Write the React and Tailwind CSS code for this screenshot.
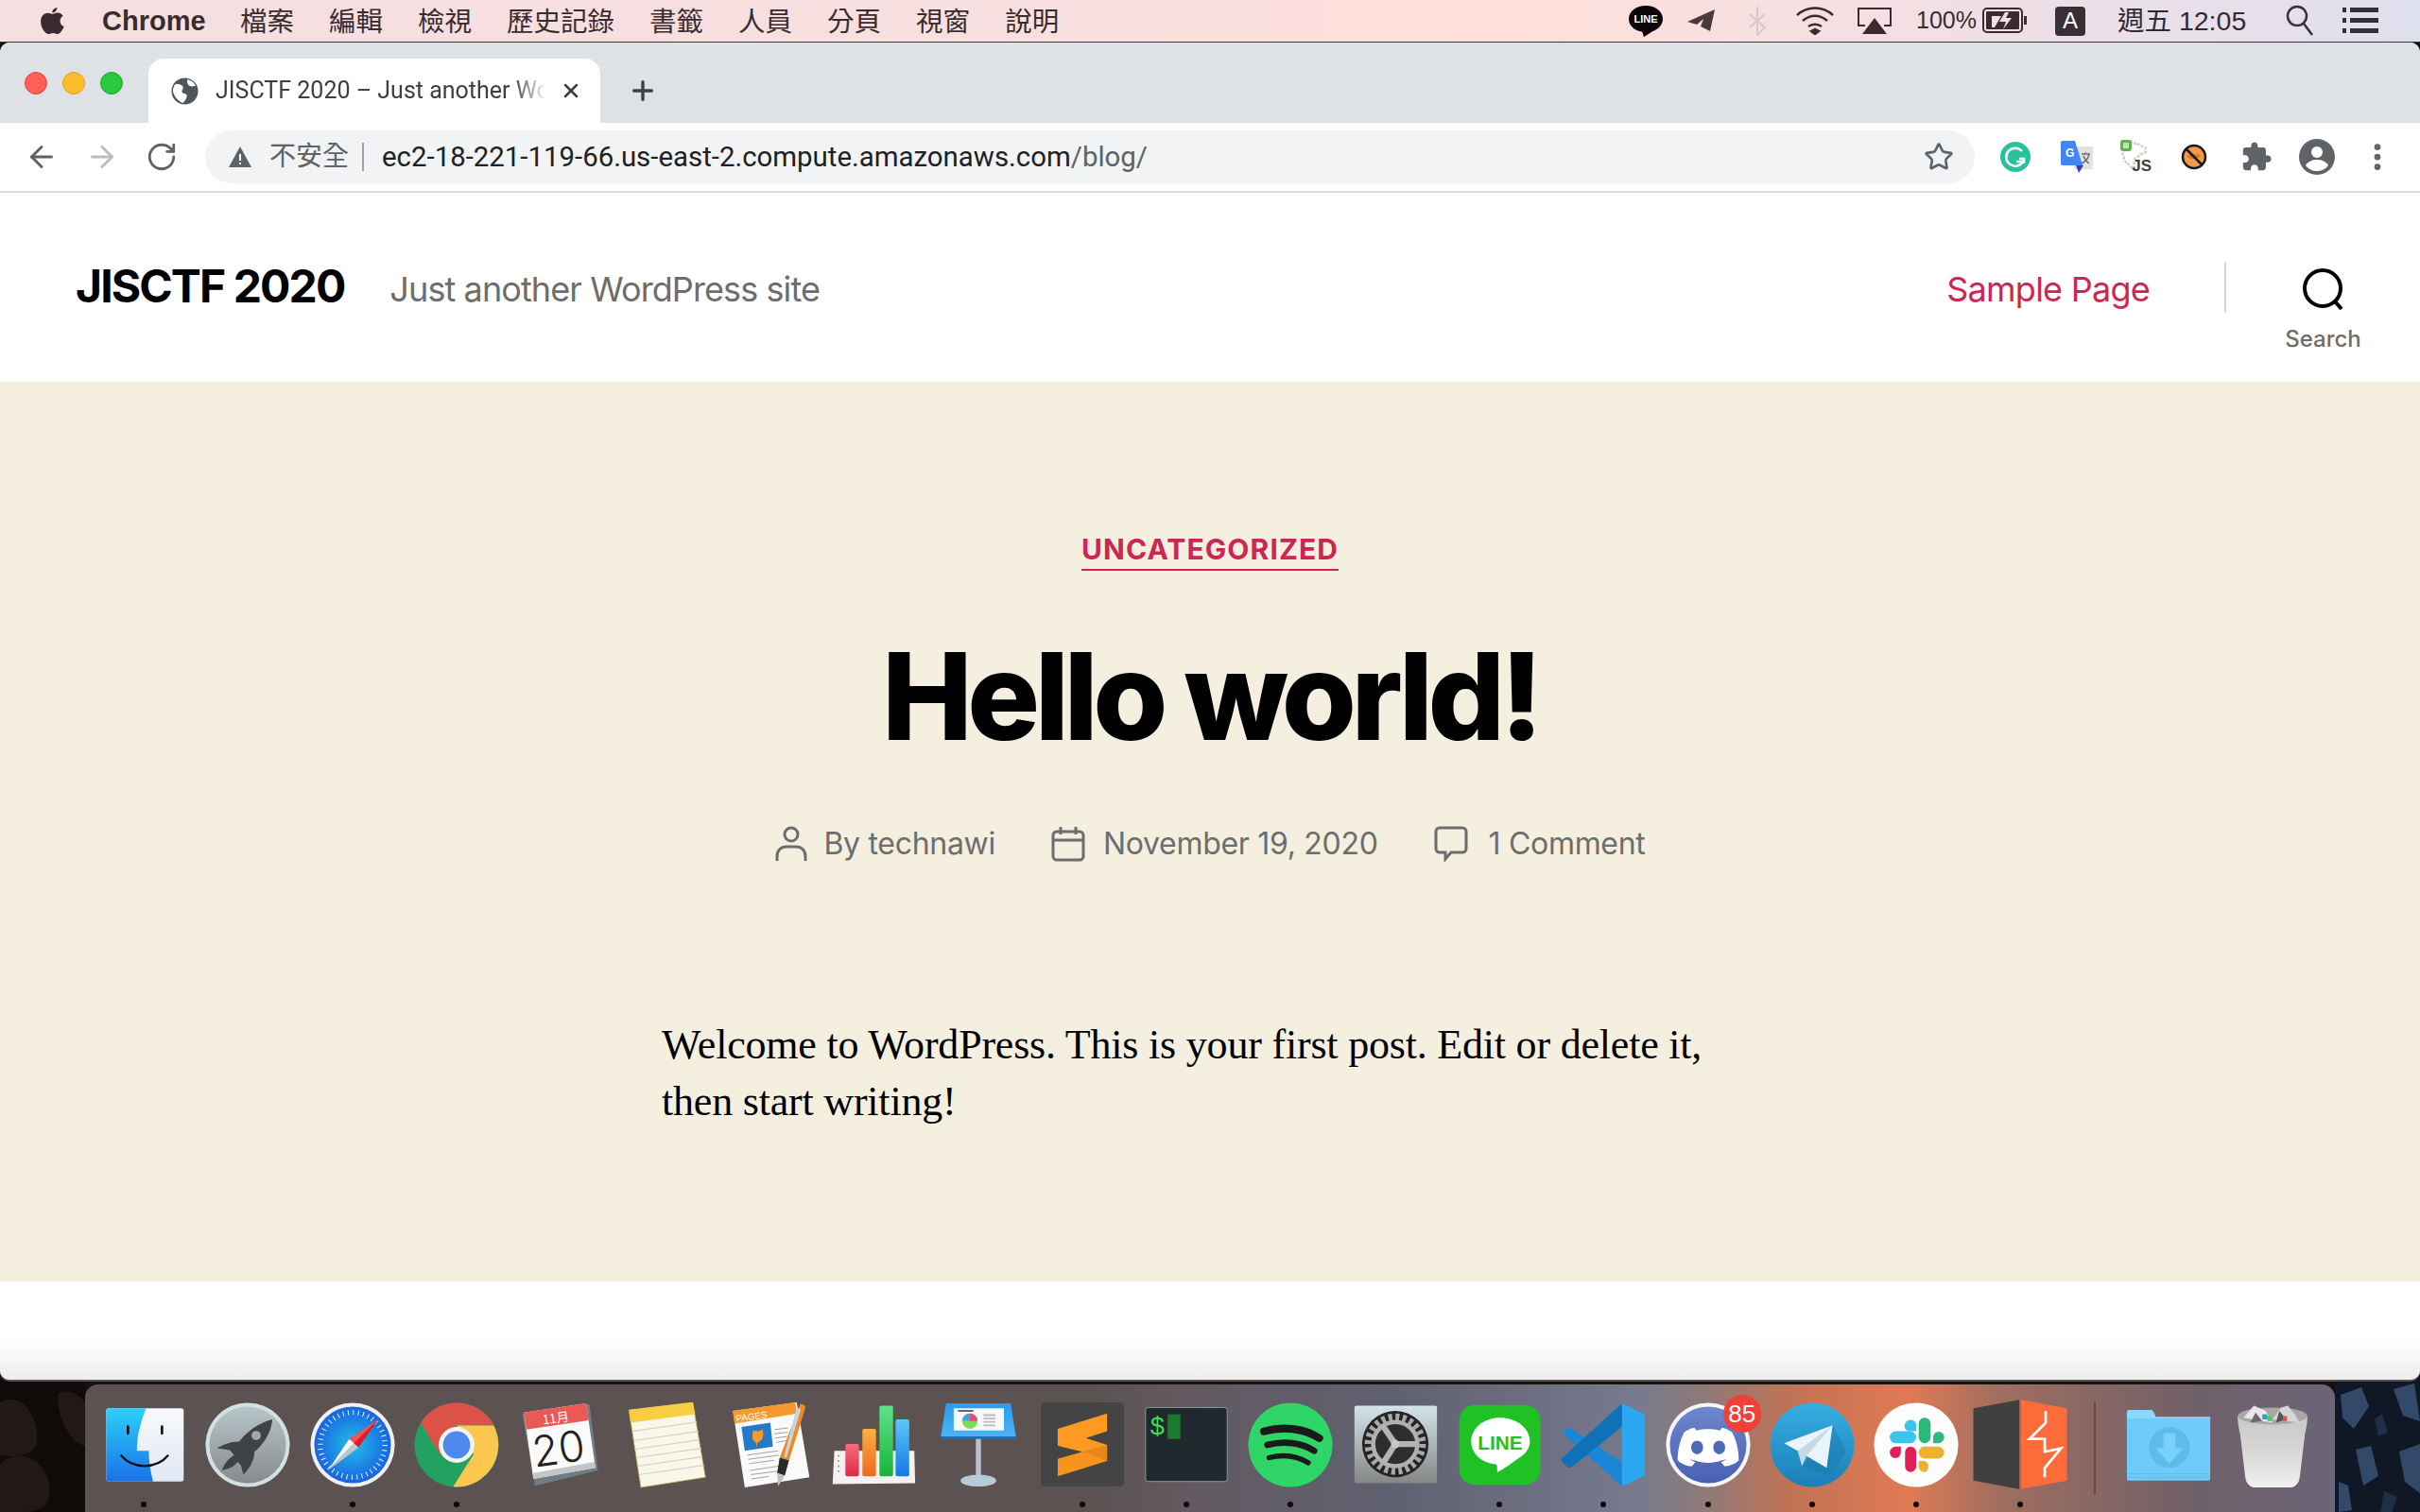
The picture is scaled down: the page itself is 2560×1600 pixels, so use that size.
import { ArrowLeft, ArrowRight, RotateCw, Star, Plus, X, EllipsisVertical } from 'lucide-react'

const MENUS = ['檔案', '編輯', '檢視', '歷史記錄', '書籤', '人員', '分頁', '視窗', '說明']

/* ── menu bar ── */
function MenuBar() {
  return (
    <div className="h-[44px] flex items-center justify-between bg-[linear-gradient(90deg,#f6dfe1_0%,#f8dfe0_40%,#ffe0da_62%,#f0dfe6_82%,#dfe0ee_100%)] border-b border-[#3b3338] box-content text-[#3a2c2e] font-['Liberation_Sans','Noto_Sans_CJK_TC',sans-serif] text-[28.5px]">
      <div className="flex items-center pl-[42px]">
        <svg viewBox="0 0 24 28" className="w-[26px] h-[32px] fill-[#3a2c2e]">
          <path d="M17 1c.2 2-1.700 5-4.700 5C12 3.700 14.300 1.300 17 1zM12.400 7.400c1 0 2.700-1.300 5-1.200 1 0 3.700.4 5.400 2.900-4.300 2.800-3.600 8.700.9 10.500-1 2.700-3.600 7.300-6.300 7.400-1.600 0-2.400-1-4.300-1s-2.800 1-4.300 1C5.200 26.900 1 20.400 1 14.700 1 9 4.600 6.300 7.900 6.300c1.900 0 3.400 1.100 4.500 1.100z" />
        </svg>
        <span className="ml-[40px] pt-[2px] font-bold text-[29px] w-[146px]">Chrome</span>
        <div className="flex gap-[37px] pt-[2px]">
          {MENUS.map((m) => <span key={m}>{m}</span>)}
        </div>
      </div>
      <div className="flex items-center pr-[44px]">
        <svg viewBox="0 0 36 33" className="w-[36px] h-[33px]">
          <path d="M18 0C8 0 0 6 0 14c0 7 6 12.500 14 13.600.8 1.400 1.200 3.400 2 5.400 3-1.800 6-4 9-5.800C31.500 25 36 20 36 14 36 6 28 0 18 0z" fill="#0c0508" />
          <text x="18" y="18" textAnchor="middle" fontSize="11" fontWeight="700" fill="#fff" fontFamily="Liberation Sans">LINE</text>
        </svg>
        <svg viewBox="0 0 30 24" className="ml-[26px] w-[30px] h-[24px] fill-[#4a3a3c]"><path d="M29 0 0 13l10 3 7-6-3 8 10 5z" /></svg>
        <svg viewBox="0 0 20 32" className="ml-[34px] w-[20px] h-[32px] fill-none stroke-[#d9c6c9] stroke-[2]"><path d="M10 1v30l8-8L2 9m0 14L18 9z" /></svg>
        <svg viewBox="0 0 42 30" className="ml-[30px] w-[42px] h-[30px] fill-none stroke-[#3a2c2e] stroke-[2.500]"><path d="M2 9c11-10 27-10 38 0M8 15c8-7 18-7 26 0" /><path d="M14 21c4-3 10-3 14 0" /><path d="M17 26l4-2 4 2-4 3z" fill="#3a2c2e" /></svg>
        <svg viewBox="0 0 38 30" className="ml-[23px] w-[38px] h-[30px]"><path d="M9 20H2V2h34v18h-7" fill="none" stroke="#3a2c2e" strokeWidth="2" /><path d="M19 12l13 17H6z" fill="#3a2c2e" /></svg>
        <span className="ml-[25px] text-[25px] w-[70px]">100%</span>
        <svg viewBox="0 0 48 28" className="w-[48px] h-[28px]">
          <rect x="1" y="1" width="41" height="25" rx="4" fill="none" stroke="#3a2c2e" strokeWidth="2" />
          <rect x="4" y="4" width="35" height="19" rx="1" fill="#3a2c2e" />
          <rect x="44" y="9" width="3" height="9" fill="#3a2c2e" />
          <path d="M10 9h10l-7 12h-3zM24 5 18 15h7l-3 8 9-12h-6l3-6z" fill="#f1dfe6" />
        </svg>
        <span className="ml-[29px] w-[32px] h-[31px] rounded-[4px] bg-[#3a2f35] text-white text-[24px] flex items-center justify-center">A</span>
        <span className="ml-[34px] w-[136px] whitespace-nowrap text-[#2f2b35]">週五 12:05</span>
        <svg viewBox="0 0 30 34" className="ml-[42px] w-[30px] h-[34px] fill-none stroke-[#3a3038] stroke-[2.500]"><circle cx="12" cy="12" r="10" /><path d="M19 20l9 12" /></svg>
        <svg viewBox="0 0 38 28" className="ml-[30px] w-[38px] h-[28px] fill-[#30303f]"><rect width="4" height="5" /><rect x="8" width="30" height="5" /><rect y="11" width="4" height="5" /><rect x="8" y="11" width="30" height="5" /><rect y="22" width="4" height="5" /><rect x="8" y="22" width="30" height="5" /></svg>
      </div>
    </div>
  )
}

/* ── tab strip ── */
function TabStrip() {
  return (
    <div className="h-[85px] bg-[#dee1e6] flex items-end rounded-t-[10px]">
      <div className="flex gap-[16px] h-[85px] items-center pl-[26px] w-[157px]">
        <span className="w-[24px] h-[24px] rounded-full bg-[#ff5f57] border border-[#e0443e] shrink-0" />
        <span className="w-[24px] h-[24px] rounded-full bg-[#febc2e] border border-[#dea123] shrink-0" />
        <span className="w-[24px] h-[24px] rounded-full bg-[#28c840] border border-[#1aab29] shrink-0" />
      </div>
      <div className="w-[478px] h-[68px] bg-white rounded-t-[16px] flex items-center pl-[24px]">
        <svg viewBox="0 0 30 30" className="w-[29px] h-[29px] shrink-0">
          <circle cx="15" cy="15" r="14.500" fill="#50555b" />
          <path d="M5 7c4 0 7 1 8 3s-2 4-1 6 4 1 5 3-1 6-4 9C8 26 3 21 2 15c0-3 1-6 3-8zM18 2c4 1 7 3 9 7-3 1-5 1-7 0s-3-4-2-7z" fill="#fff" />
        </svg>
        <span className="ml-[18px] w-[350px] overflow-hidden whitespace-nowrap text-[25px] text-[#3c4043] font-['Roboto',sans-serif] [mask-image:linear-gradient(90deg,#000_90%,transparent)]">JISCTF 2020 – Just another WordPress site</span>
        <X className="ml-[14px] w-[24px] h-[24px] text-[#3c4043]" strokeWidth={2.5} />
      </div>
      <div className="h-[68px] flex items-center pl-[29px]">
        <Plus className="w-[32px] h-[32px] text-[#3c4043]" strokeWidth={2.5} />
      </div>
    </div>
  )
}

/* ── toolbar ── */
function Toolbar() {
  return (
    <div className="h-[74px] bg-white border-b-2 border-[#dadce0] flex items-center">
      <ArrowLeft className="ml-[26px] w-[36px] h-[36px] text-[#5f6368]" strokeWidth={2} />
      <ArrowRight className="ml-[28px] w-[36px] h-[36px] text-[#b9bcc0]" strokeWidth={2} />
      <RotateCw className="ml-[28px] w-[34px] h-[34px] text-[#5f6368]" strokeWidth={2} />
      <div className="ml-[29px] w-[1872px] h-[56px] rounded-full bg-[#f1f3f4] flex items-center pl-[24px] font-['Roboto','Noto_Sans_CJK_TC',sans-serif]">
        <svg viewBox="0 0 26 24" className="w-[26px] h-[24px]"><path d="M13 1 25 23H1z" fill="#5f6368" /><rect x="12" y="9" width="2" height="7" fill="#fff" /><rect x="12" y="18" width="2" height="2" fill="#fff" /></svg>
        <span className="ml-[18px] text-[28px] text-[#5f6368]">不安全</span>
        <span className="ml-[14px] w-[2px] h-[30px] bg-[#9aa0a6]" />
        <span className="ml-[19px] text-[29.400px] text-[#202124] whitespace-nowrap">ec2-18-221-119-66.us-east-2.compute.amazonaws.com<span className="text-[#5f6368]">/blog/</span></span>
        <Star className="ml-auto mr-[22px] w-[32px] h-[32px] text-[#5f6368]" strokeWidth={2} />
      </div>
      <svg viewBox="0 0 32 32" className="ml-[27px] w-[32px] h-[32px]">
        <circle cx="16" cy="16" r="16" fill="#27c29c" />
        <path d="M23 10a9.500 9.500 0 1 0 1 11h-7" fill="none" stroke="#fff" strokeWidth="2.500" />
        <path d="M20 18h5v5" fill="none" stroke="#fff" strokeWidth="2.500" />
      </svg>
      <svg viewBox="0 0 34 34" className="ml-[32px] w-[34px] h-[34px]">
        <rect x="14" y="6" width="20" height="24" rx="1" fill="#e2e2e2" />
        <path d="M2 0h13l8 26H2a2 2 0 0 1-2-2V2a2 2 0 0 1 2-2z" fill="#4285f4" />
        <path d="M16 26h8l-5 8z" fill="#3a3fb0" />
        <text x="5" y="17" fontSize="12" fontWeight="700" fill="#fff" fontFamily="Liberation Sans">G</text>
        <path d="M22 14h9M26 12v2M30 14c-1 5-4 8-8 10M24 16c1 3 3 6 6 8" fill="none" stroke="#6a7076" strokeWidth="1.400" />
      </svg>
      <svg viewBox="0 0 34 36" className="ml-[29px] w-[34px] h-[36px]">
        <path d="M10 3c3-2 6 0 6 2 3-1 6 0 7 2 3 0 5 3 4 5-1 3-4 3-6 3-1 3-5 3-6 6 0 3-1 6 0 9-3 0-7-3-7-6-3 0-5-3-4-6-2-2-2-5 0-7" fill="none" stroke="#cfcfcf" strokeWidth="2.500" strokeDasharray="3 1.500" />
        <rect x="0" y="0" width="12" height="12" rx="3" fill="#62b34e" />
        <rect x="3" y="3" width="6" height="6" rx="1" fill="#bfe5b0" />
        <text x="33" y="33" textAnchor="end" fontSize="17" fontWeight="700" fill="#3c4043" fontFamily="Liberation Sans">JS</text>
      </svg>
      <svg viewBox="0 0 28 30" className="ml-[30px] w-[28px] h-[30px]">
        <circle cx="14" cy="15" r="12" fill="#f2994a" stroke="#1a1a1a" strokeWidth="2.500" />
        <path d="M7 14c4-2 10-2 14-1-1 4-9 5-13 3z" fill="#d77a1e" />
        <path d="M5 6l18 18" stroke="#1a1a1a" strokeWidth="2.500" />
      </svg>
      <svg viewBox="0 0 24 24" className="ml-[35px] w-[34px] h-[34px] fill-[#5f6368]">
        <path d="M20.500 11H19V7c0-1.100-.9-2-2-2h-4V3.500C13 2.120 11.880 1 10.500 1S8 2.120 8 3.500V5H4c-1.100 0-1.990.9-1.990 2v3.800H3.500c1.490 0 2.700 1.210 2.700 2.700s-1.210 2.700-2.700 2.700H2V20c0 1.100.9 2 2 2h3.800v-1.500c0-1.490 1.210-2.700 2.700-2.700 1.490 0 2.700 1.210 2.700 2.700V22H17c1.100 0 2-.9 2-2v-4h1.500c1.380 0 2.500-1.120 2.500-2.500S21.880 11 20.500 11z" />
      </svg>
      <svg viewBox="0 0 38 38" className="ml-[28px] w-[38px] h-[38px]">
        <circle cx="19" cy="19" r="19" fill="#5f6368" />
        <circle cx="19" cy="14" r="6" fill="#fff" />
        <path d="M7 28c3-5 8-6 12-6s9 1 12 6c-3 4-7 6-12 6S10 32 7 28z" fill="#fff" />
      </svg>
      <EllipsisVertical className="ml-[27px] w-[36px] h-[36px] text-[#5f6368]" strokeWidth={2.5} />
    </div>
  )
}

/* ── wordpress page ── */
function PageHeader() {
  return (
    <header className="h-[200px] bg-white flex items-center font-['Inter',sans-serif] pl-[80px]">
      <span className="text-[48px] font-bold tracking-[-1.900px] text-black pb-[2px]">JISCTF 2020</span>
      <span className="ml-[48px] text-[36px] text-[#6d6d6d] tracking-[-0.900px] pt-[4px]">Just another WordPress site</span>
      <span className="ml-auto text-[36px] text-[#cd2653] tracking-[-0.750px] pt-[3px]">Sample Page</span>
      <span className="ml-[79px] w-[2px] h-[54px] bg-[#dcd7ca]" />
      <div className="w-[205px] flex flex-col items-center pt-[52px]">
        <svg viewBox="0 0 46 46" className="w-[46px] h-[46px] fill-none stroke-black stroke-[4]">
          <circle cx="22" cy="21" r="19" />
          <path d="M35 35l7 8" />
        </svg>
        <span className="mt-[11px] text-[24px] font-medium text-[#6d6d6d]">Search</span>
      </div>
    </header>
  )
}

function Post() {
  return (
    <main className="h-[952px] bg-[#f5efe0] font-['Inter',sans-serif] flex flex-col items-center">
      <span className="mt-[159px] text-[30px] font-bold tracking-[1.100px] text-[#cd2653] border-b-2 border-[#cd2653] leading-[36px] pb-[3px]">UNCATEGORIZED</span>
      <h1 className="mt-[58px] text-[128px] font-[800] leading-[150px] tracking-[-5.500px] text-black">Hello world!</h1>
      <div className="mt-[61px] flex items-center text-[32px] text-[#6d6d6d] leading-[40px] tracking-[-0.300px]">
        <svg viewBox="0 0 36 38" className="w-[36px] h-[38px] fill-none stroke-[#6d6d6d] stroke-[3]">
          <circle cx="18" cy="9" r="7" />
          <path d="M3 37v-5c0-6 4-10 10-10h10c6 0 10 4 10 10v5" />
        </svg>
        <span className="ml-[16px]">By technawi</span>
        <svg viewBox="0 0 36 38" className="ml-[59px] w-[36px] h-[38px] fill-none stroke-[#6d6d6d] stroke-[3]">
          <rect x="2" y="6" width="32" height="30" rx="4" />
          <path d="M2 15h32M10 1v8M26 1v8" />
        </svg>
        <span className="ml-[19px]">November 19, 2020</span>
        <svg viewBox="0 0 36 38" className="ml-[59px] w-[36px] h-[38px] fill-none stroke-[#6d6d6d] stroke-[3]"><path d="M6 2h24a4 4 0 0 1 4 4v18a4 4 0 0 1-4 4H18l-6 7v-7H6a4 4 0 0 1-4-4V6a4 4 0 0 1 4-4z" /></svg>
        <span className="ml-[22px]">1 Comment</span>
      </div>
      <p className="mt-[163px] w-[1160px] text-[44px] leading-[60px] text-black font-['Liberation_Serif',serif] tracking-[-0.200px]">
        Welcome to WordPress. This is your first post. Edit or delete it,<br />then start writing!
      </p>
    </main>
  )
}

function Defs() {
  return (
    <defs>
      <linearGradient id="finderL" x1="0" y1="0" x2="0" y2="1"><stop offset="0" stopColor="#2bd0fb" /><stop offset="1" stopColor="#1a72e6" /></linearGradient>
      <linearGradient id="finderR" x1="0" y1="0" x2="0" y2="1"><stop offset="0" stopColor="#f8f9fb" /><stop offset="1" stopColor="#dfe9f5" /></linearGradient>
      <linearGradient id="rocketG" x1="0" y1="0" x2="0" y2="1"><stop offset="0" stopColor="#b6c5c9" /><stop offset="1" stopColor="#888b8c" /></linearGradient>
      <radialGradient id="safariG"><stop offset="0" stopColor="#1fc0e8" /><stop offset="1" stopColor="#1a63e0" /></radialGradient>
      <linearGradient id="redB" x1="0" y1="0" x2="0" y2="1"><stop offset="0" stopColor="#f76b7c" /><stop offset="1" stopColor="#df2a44" /></linearGradient>
      <linearGradient id="orB" x1="0" y1="0" x2="0" y2="1"><stop offset="0" stopColor="#fbb040" /><stop offset="1" stopColor="#ee6a1f" /></linearGradient>
      <linearGradient id="grB" x1="0" y1="0" x2="0" y2="1"><stop offset="0" stopColor="#5fe28a" /><stop offset="1" stopColor="#17b33c" /></linearGradient>
      <linearGradient id="blB" x1="0" y1="0" x2="0" y2="1"><stop offset="0" stopColor="#5cc8fb" /><stop offset="1" stopColor="#1478e8" /></linearGradient>
      <linearGradient id="kn" x1="0" y1="0" x2="0" y2="1"><stop offset="0" stopColor="#2a9bef" /><stop offset="1" stopColor="#4cb3f5" /></linearGradient>
      <linearGradient id="prefsG" x1="0" y1="0" x2="0" y2="1"><stop offset="0" stopColor="#d3e4ea" /><stop offset="1" stopColor="#868686" /></linearGradient>
      <linearGradient id="tgG" x1="0" y1="0" x2="0" y2="1"><stop offset="0" stopColor="#37aee2" /><stop offset="1" stopColor="#1a7fb8" /></linearGradient>
      <linearGradient id="dcG" x1="0" y1="0" x2="0" y2="1"><stop offset="0" stopColor="#6f86cf" /><stop offset="1" stopColor="#4760b0" /></linearGradient>
      <linearGradient id="trG" x1="0" y1="0" x2="0" y2="1"><stop offset="0" stopColor="#c9c9c9" /><stop offset="0.500" stopColor="#d8d6d6" /><stop offset="1" stopColor="#f1f1f1" /></linearGradient>
    </defs>
  )
}

/* ── dock icons, all on a 100x100 box ── */
const ICONS = {
  finder: (
    <>
      <rect x="6" y="7" width="91" height="86" rx="3" fill="url(#finderR)" />
      <path d="M9 7h44c-6 14-11 32-11 50h14c0 12 2 24 5 36H9a3 3 0 0 1-3-3V10a3 3 0 0 1 3-3z" fill="url(#finderL)" />
      <path d="M23 62c14 17 42 17 56 0" fill="none" stroke="#111" strokeWidth="2.500" />
      <rect x="30" y="27" width="3" height="11" rx="1.500" fill="#111" /><rect x="70" y="27" width="3" height="11" rx="1.500" fill="#111" />
    </>
  ),
  rocket: (
    <>
      <circle cx="50" cy="50" r="49.500" fill="#d3e0e2" />
      <circle cx="50" cy="50" r="45" fill="url(#rocketG)" />
      <path d="M79 20C62 24 48 36 40 46c-10 0-20 4-26 8l15 2 5 6c-6 4-12 10-14 18 8-2 14-4 18-10l4 4 3 11c7-7 13-17 13-27 12-10 20-24 21-38z" fill="#3f4246" />
      <circle cx="60" cy="39" r="5.500" fill="#a3a8aa" />
    </>
  ),
  safari: (
    <>
      <circle cx="50" cy="50" r="49.500" fill="#eef2f5" />
      <circle cx="50" cy="50" r="45" fill="url(#safariG)" />
      <circle cx="50" cy="50" r="38" fill="none" stroke="#d5ebfb" strokeWidth="6" strokeDasharray="1.200 4.770" />
      <path d="M81 19 46 43l5.500 5z" fill="#f2534f" />
      <path d="M81 19 51.500 48l5.500 5z" fill="#d91f26" />
      <path d="M21 80 46 43l5.500 5z" fill="#f4f5f6" />
      <path d="M21 80 51.500 48l5.500 5z" fill="#c2c6ca" />
    </>
  ),
  chrome: (
    <>
      <circle cx="50" cy="50" r="49.500" fill="#23a160" />
      <path d="M50 27h43.500A49.500 49.500 0 0 1 46 99.300L70 61z" fill="#fdc74f" />
      <path d="M8 24A49.500 49.500 0 0 1 94 27H50L30 61z" fill="#dc5148" />
      <circle cx="50" cy="50" r="21" fill="#f2f4f6" />
      <circle cx="50" cy="50" r="16" fill="#5089ee" />
    </>
  ),
  calendar: (
    <>
      <path d="M5 14 84 2l10 78-74 18z" fill="#6f7e86" />
      <path d="M7 12 80 1l11 76-73 13z" fill="#fafafa" />
      <path d="M18 83 90 70l1 7-73 13z" fill="#c6c6c6" />
      <path d="M7 12 80 1l3 20L10 32z" fill="#e95a57" />
      <text x="45" y="24" textAnchor="middle" fontSize="15" fill="#fff" fontFamily="Noto Sans CJK TC" transform="rotate(-8 45 24)">11月</text>
      <text x="50" y="72" textAnchor="middle" fontSize="50" fontWeight="300" fill="#222" fontFamily="Inter" transform="rotate(-8 50 72)">20</text>
    </>
  ),
  notes: (
    <>
      <path d="M7 9 82 0l15 88-76 12z" fill="#f9f6ea" stroke="#c9a84a" strokeWidth="0.800" />
      <path d="M7 9 82 0l3 14L9 24z" fill="#f7cd42" />
      <path d="M11 34l76-11M13 45l76-11M14 55l76-11M16 65l76-11M17 75l76-11M19 85l76-11" stroke="#d3d0c4" strokeWidth="1.200" />
    </>
  ),
  pages: (
    <>
      <path d="M7 10 82 0l15 88-76 12z" fill="#fafafa" />
      <path d="M7 10 80 0l3 13L9 25z" fill="#f59a2f" />
      <text x="11" y="23" fontSize="11" fill="#fff" fontFamily="Liberation Sans" transform="rotate(-8 11 23)">PAGES</text>
      <path d="M17 29 51 24l3 28-33 5z" fill="#2579c9" />
      <path d="M31 33l6 1 5-2c2 8-1 14-6 15l-1 6-1-6c-5-2-5-8-3-14z" fill="#f59a2f" />
      <path d="M56 32l16-2M56 37l16-2M57 42l14-2M58 47l12-2M24 62l36-5M25 67l36-5M26 72l30-4M27 80l40-6M28 85l38-5M29 90l20-3" stroke="#9a9a9a" strokeWidth="1" />
      <path d="M86 2c4 0 7 2 6 5L73 68l-11-3z" fill="#f08a1c" />
      <path d="M82 6l5 2-17 57-3-1z" fill="#c3d6e6" />
      <path d="M62 65l11 3-5 18-9-3z" fill="#2a2a2a" />
      <path d="M59 83l9 3-8 13z" fill="#b9c4cc" />
    </>
  ),
  numbers: (
    <>
      <path d="M4 57h94l1 38-97 1z" fill="#f2f2f2" />
      <rect x="17" y="49" width="16" height="38" rx="2" fill="url(#redB)" />
      <rect x="37" y="31" width="16" height="56" rx="2" fill="url(#orB)" />
      <rect x="57" y="4" width="16" height="83" rx="2" fill="url(#grB)" />
      <rect x="76" y="20" width="16" height="67" rx="2" fill="url(#blB)" />
      <path d="M9 62v2M9 68v2M9 74v2M9 80v2" stroke="#999" strokeWidth="2" />
    </>
  ),
  keynote: (
    <>
      <path d="M12 1h76l6 39H6z" fill="url(#kn)" />
      <rect x="6" y="40" width="88" height="3" fill="#1a6fb8" />
      <rect x="21" y="7" width="59" height="26" fill="#f6f8fb" />
      <rect x="26" y="9" width="18" height="2" fill="#555" />
      <circle cx="40" cy="22" r="9" fill="#7ed957" />
      <path d="M40 22v-9a9 9 0 0 1 9 9z" fill="#f0477f" />
      <path d="M40 22l-9-1a9 9 0 0 1 9-8z" fill="#3ba5e8" />
      <path d="M56 15h14M56 19h14M56 23h14M56 27h14" stroke="#bbb" strokeWidth="2" />
      <rect x="47" y="43" width="6" height="46" fill="#b6c4d0" />
      <ellipse cx="50" cy="92" rx="21" ry="7" fill="#b8cad8" />
    </>
  ),
  sublime: (
    <>
      <rect x="1" y="0" width="98" height="99" rx="5" fill="#444444" />
      <path d="M21 31 79 13v21l-25 8 25 8v19L21 51z" fill="#ff9a20" />
      <path d="M21 66l29-8 29 11-58 18z" fill="#f7941e" />
      <path d="M50 58 21 51v15z" fill="#444444" />
      <path d="M50 58 79 50v19z" fill="#e8871a" />
    </>
  ),
  terminal: (
    <>
      <rect x="2" y="6" width="96" height="87" rx="3" fill="#20292e" stroke="#9aa3a7" strokeWidth="1" />
      <text x="7" y="38" fontSize="30" fill="#3ddc58" fontFamily="Liberation Mono">$</text>
      <rect x="28" y="14" width="15" height="29" fill="#1c7a30" />
    </>
  ),
  spotify: (
    <>
      <circle cx="50" cy="50" r="49.500" fill="#2fd566" />
      <path d="M19 34c22-6 46-4 65 8" fill="none" stroke="#1a1a1a" strokeWidth="9" strokeLinecap="round" />
      <path d="M23 50c19-5 40-3 55 7" fill="none" stroke="#1a1a1a" strokeWidth="7.500" strokeLinecap="round" />
      <path d="M25 65c16-4 33-2 46 6" fill="none" stroke="#1a1a1a" strokeWidth="6" strokeLinecap="round" />
    </>
  ),
  prefs: (
    <>
      <rect x="2" y="4" width="97" height="91" rx="2" fill="url(#prefsG)" />
      <circle cx="50" cy="49" r="39" fill="#242424" />
      <circle cx="50" cy="49" r="32" fill="none" stroke="#a8a8a8" strokeWidth="8" strokeDasharray="4.500 3.880" />
      <circle cx="50" cy="49" r="26" fill="#2e2e2e" stroke="#b0b0b0" strokeWidth="5" />
      <path d="M50 49 35 27M50 49h26M50 49 36 71" stroke="#b4b4b4" strokeWidth="7" />
      <circle cx="50" cy="49" r="5" fill="#c8c8c8" />
    </>
  ),
  line: (
    <>
      <rect x="3" y="3" width="95" height="94" rx="18" fill="#1fc124" />
      <path d="M51 18c-19 0-34 12-34 28 0 14 12 25 30 27 1 3 0 7 1 9 3-1 12-7 23-15 9-6 15-12 15-21 0-16-16-28-35-28z" fill="#fff" />
      <text x="51" y="56" textAnchor="middle" fontSize="23" fontWeight="700" fill="#1fc124" fontFamily="Liberation Sans">LINE</text>
    </>
  ),
  vscode: (
    <>
      <path d="M2 36 9 29l65 42-2 28z" fill="#1b86d4" />
      <path d="M72 1 74 27 13 76c-2 1-4 1-6-1l-5-5c-2-2-2-3 0-5L72 1z" fill="#0f72b8" />
      <path d="M72 1l25 12c1.500 1 2 2 2 4v66c0 2-.5 3-2 4L72 99z" fill="#2ca8f1" />
    </>
  ),
  discord: (
    <>
      <circle cx="50" cy="50" r="49.500" fill="#f4f6fb" />
      <circle cx="50" cy="50" r="45" fill="url(#dcG)" />
      <path d="M34 30c-3 0-8 2-12 5-5 9-8 21-8 33 5 5 12 7 17 7l4-5c-3-1-5-2-7-4 2 1 4 2 6 2 10 4 22 4 32 0 2 0 4-1 6-2-2 2-4 3-7 4l4 5c5 0 12-2 17-7 0-12-3-24-8-33-4-3-9-5-12-5l-2 3c-10-2-18-2-28 0z" fill="#fff" />
      <ellipse cx="37" cy="53" rx="7" ry="8" fill="#5068b8" /><ellipse cx="63" cy="53" rx="7" ry="8" fill="#5068b8" />
    </>
  ),
  telegram: (
    <>
      <circle cx="50" cy="50" r="49.500" fill="url(#tgG)" />
      <path d="M74 27 38 75l32 12 20-30z" fill="#17709f" opacity="0.350" />
      <path d="M74 27 17 48l16 9 34 20z" fill="#eaf4fb" />
      <path d="M74 27 33 57l5 18 6-13z" fill="#c4d9e8" />
    </>
  ),
  slack: (
    <>
      <circle cx="50" cy="50" r="49.500" fill="#fdfdfd" />
      <rect x="19" y="34" width="31" height="14" rx="7" fill="#3cc4ef" /><path d="M37 25a7 7 0 0 1 13 0v9H43a6 6 0 0 1-6-9z" fill="#3cc4ef" />
      <rect x="53" y="18" width="14" height="30" rx="7" fill="#2eb67d" /><path d="M70 48V41a6.500 6.500 0 0 1 13 0 7 7 0 0 1-7 7z" fill="#2eb67d" />
      <rect x="53" y="52" width="30" height="14" rx="7" fill="#ecb22e" /><path d="M53 69h7a7 7 0 0 1 0 13 7 7 0 0 1-7-7z" fill="#ecb22e" />
      <rect x="37" y="52" width="13" height="30" rx="6.500" fill="#e01e5a" /><path d="M32 52v7a6.500 6.500 0 0 1-13 0 7 7 0 0 1 7-7z" fill="#e01e5a" />
    </>
  ),
  postman: (
    <>
      <path d="M49 -3-5 7v85l54 10z" fill="#404040" />
      <path d="M51-3l54 10v85L51 102z" fill="#ff6c3c" />
      <path d="M80 10v14L61 43h18v15l19-4-19 23v11" fill="none" stroke="#fff" strokeWidth="3" />
    </>
  ),
  downloads: (
    <>
      <path d="M1 11a2 2 0 0 1 2-2h26c3 0 4 3 6 8H99v9H1z" fill="#8bd8fc" />
      <path d="M1 19h98v71a2 2 0 0 1-2 2H3a2 2 0 0 1-2-2z" fill="#6fcbfa" />
      <path d="M1 84h98M1 88h98" stroke="#5fb8e6" strokeWidth="1" />
      <circle cx="51" cy="53" r="24" fill="#5fbbe8" />
      <path d="M44 36h14v18h9L51 72 35 54h9z" fill="#78d0fb" />
    </>
  ),
  trash: (
    <>
      <path d="M9 16c0 8 1 12 3 22l6 50c1 8 6 12 12 12h40c6 0 11-4 12-12l6-50c2-10 3-14 3-22z" fill="url(#trG)" />
      <ellipse cx="50" cy="16" rx="41" ry="10" fill="#a8a8a8" />
      <path d="M16 18 28 4l14 6 8 14z" fill="#e8e8e8" />
      <path d="M50 20 60 6l8-2 8 10 6 10z" fill="#d6d6d6" />
      <path d="M30 12l8 10-14 2z" fill="#6a6a6a" />
      <path d="M58 10l8 10-12 4z" fill="#55565a" />
      <path d="M38 14h6v6h-6z" fill="#2aa3c8" />
      <path d="M44 16h5v6h-5z" fill="#5cbf5a" />
      <path d="M62 16h5v6h-5z" fill="#d9584e" />
    </>
  ),
}

function DockIcon({ name, dot, badge }) {
  return (
    <div className="relative w-[110.300px] h-[135px] flex justify-center shrink-0">
      <svg viewBox="0 0 100 100" className="w-[90px] h-[90px] mt-[19px] overflow-visible">
        <Defs />
        {ICONS[name]}
      </svg>
      {badge && (
        <span className="absolute top-[11px] right-[-1px] w-[40px] h-[40px] rounded-full bg-[#f04038] text-white text-[26px] flex items-center justify-center font-['Liberation_Sans',sans-serif]">{badge}</span>
      )}
      {dot && <span className="absolute bottom-[5px] left-1/2 -ml-[3px] w-[6px] h-[6px] rounded-full bg-[#120808]" />}
    </div>
  )
}

function Dock() {
  const apps = [
    ['finder', true], ['rocket'], ['safari', true], ['chrome', true], ['calendar'], ['notes'], ['pages'], ['numbers'], ['keynote'],
    ['sublime', true], ['terminal', true], ['spotify', true], ['prefs'], ['line', true], ['vscode', true], ['discord', true, '85'],
    ['telegram', true], ['slack', true], ['postman', true],
  ]
  return (
    <div className="relative h-[135px] mt-[5px] mx-[90px] rounded-t-[14px] flex pl-[7px] bg-[linear-gradient(90deg,#5c5252_0%,#5c5252_45%,#625a60_49%,#5f6070_58%,#777a8e_69%,#8f7a78_72%,#c27353_76%,#e07a55_81%,#a06e60_85%,#6e6068_94%,#6b6578_100%)]">
      {apps.map(([name, dot, badge]) => <DockIcon key={name} name={name} dot={dot} badge={badge} />)}
      <span className="w-[2px] h-[98px] mt-[19px] mx-[22px] bg-[#6e4540] shrink-0" />
      <DockIcon name="downloads" />
      <DockIcon name="trash" />
    </div>
  )
}

/* wallpaper showing either side of the dock */
function Wallpaper() {
  return (
    <svg viewBox="0 0 2560 140" className="absolute left-0 bottom-0 w-[2560px] h-[140px]">
      <rect width="90" height="140" fill="#0f0b09" />
      <path d="M0 24c16-8 32 0 38 26s-8 34-38 30zM6 84c20-8 42 0 46 28s-18 30-52 28V90zM62 14c10-4 20 0 28 10v46c-16-2-32-36-28-56z" fill="#221916" />
      <rect x="2470" width="90" height="140" fill="#101825" />
      <path d="M2476 16l22-8 8 20-16 24-12-12zM2532 10l22-6 6 40-18-6zM2492 74l16-4 8 32-16 10zM2538 76l22-8v52l-16-12zM2474 108l10 4 4 26-14 2z" fill="#33496a" />
      <path d="M2512 42l8-6 6 20-10 4zM2522 118l14 6-6 16h-12z" fill="#1f2f46" />
    </svg>
  )
}

export default function App() {
  return (
    <div className="relative w-[2560px] h-[1600px] overflow-hidden flex flex-col bg-[#15110f]">
      <Wallpaper />
      <MenuBar />
      <div className="relative h-[1415px] rounded-[10px] overflow-hidden bg-white shadow-[0_2px_0_#555] flex flex-col">
        <TabStrip />
        <Toolbar />
        <PageHeader />
        <Post />
        <div className="flex-1 bg-[linear-gradient(180deg,#ffffff_60%,#ededed_100%)]" />
      </div>
      <Dock />
    </div>
  )
}
